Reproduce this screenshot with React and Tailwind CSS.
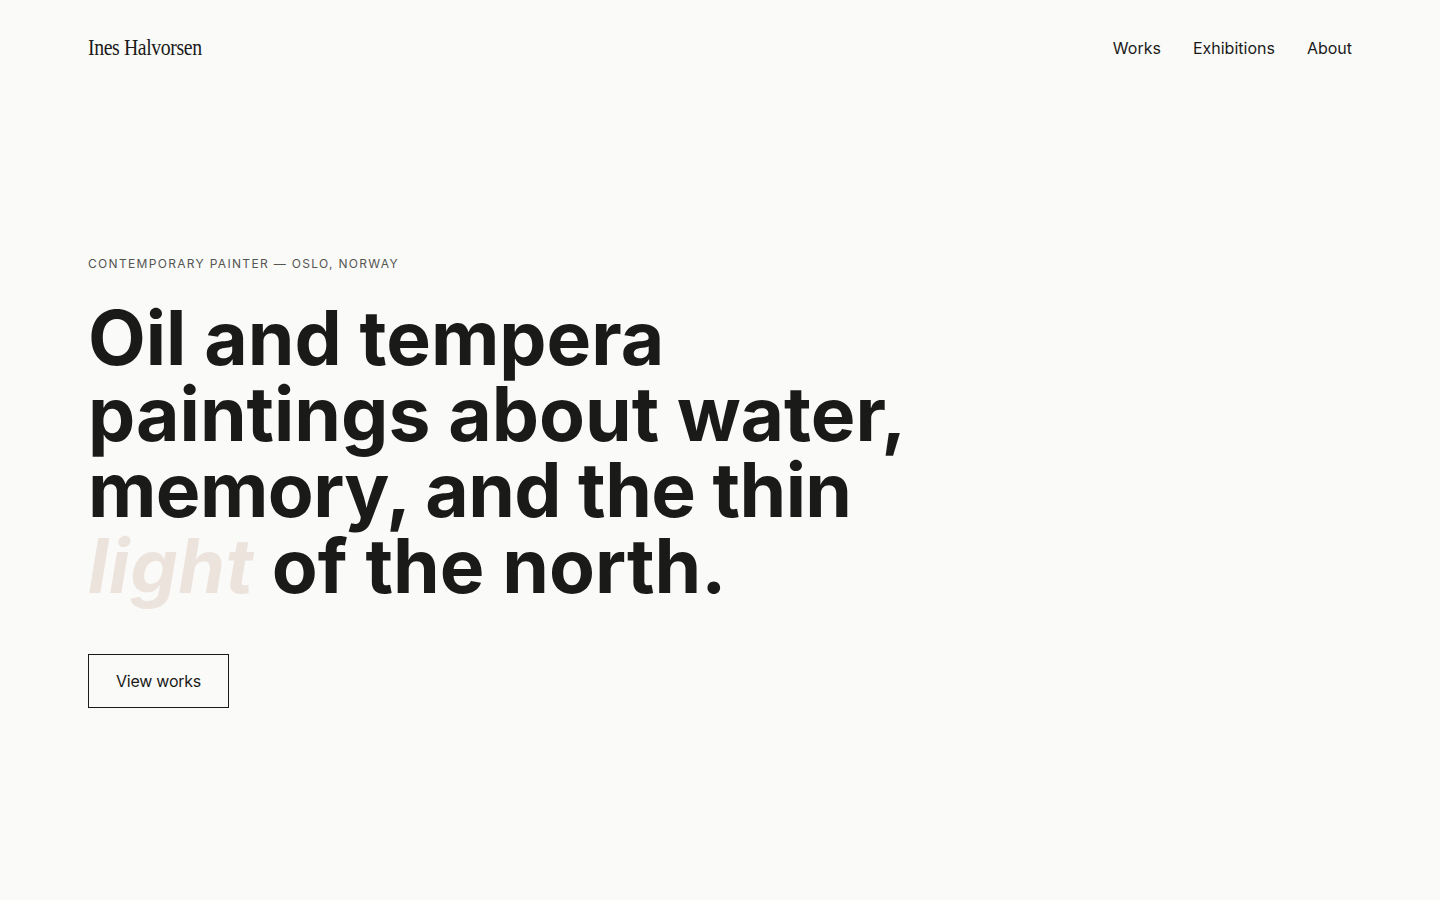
export default function App() {
  return (
    <div className="min-h-screen bg-[#fafaf8] text-[#1a1a18] font-['Inter',sans-serif]">
      {/* Top bar */}
      <header className="flex items-center justify-between px-[88px] pt-[34px]">
        <a className="font-['Liberation_Serif',serif] text-[23px] tracking-[-0.02em] leading-[28px] text-[#1a1a18] origin-left scale-x-[0.86]">
          Ines Halvorsen
        </a>
        <nav className="flex items-center gap-8 text-[16px] leading-[28px]">
          <a>Works</a>
          <a>Exhibitions</a>
          <a>About</a>
        </nav>
      </header>

      {/* Hero */}
      <section className="px-[88px] pt-[194px]">
        <p className="text-[12px] leading-[16px] tracking-[0.11em] uppercase text-[#555552]">
          Contemporary painter — Oslo, Norway
        </p>
        <h1 className="mt-[28px] text-[75px] leading-[76px] font-bold tracking-normal">
          Oil and tempera
          <br />
          paintings about water,
          <br />
          <span className="tracking-[-0.008em]">memory, and the thin</span>
          <br />
          <em className="text-[#ece3dd] tracking-[0.01em]">light</em> of the north.
        </h1>
        <button className="mt-[50px] h-[54px] px-[27px] border border-[#1a1a18] text-[16px] tracking-[-0.015em] text-[#1a1a18]">
          View works
        </button>
      </section>
    </div>
  );
}
